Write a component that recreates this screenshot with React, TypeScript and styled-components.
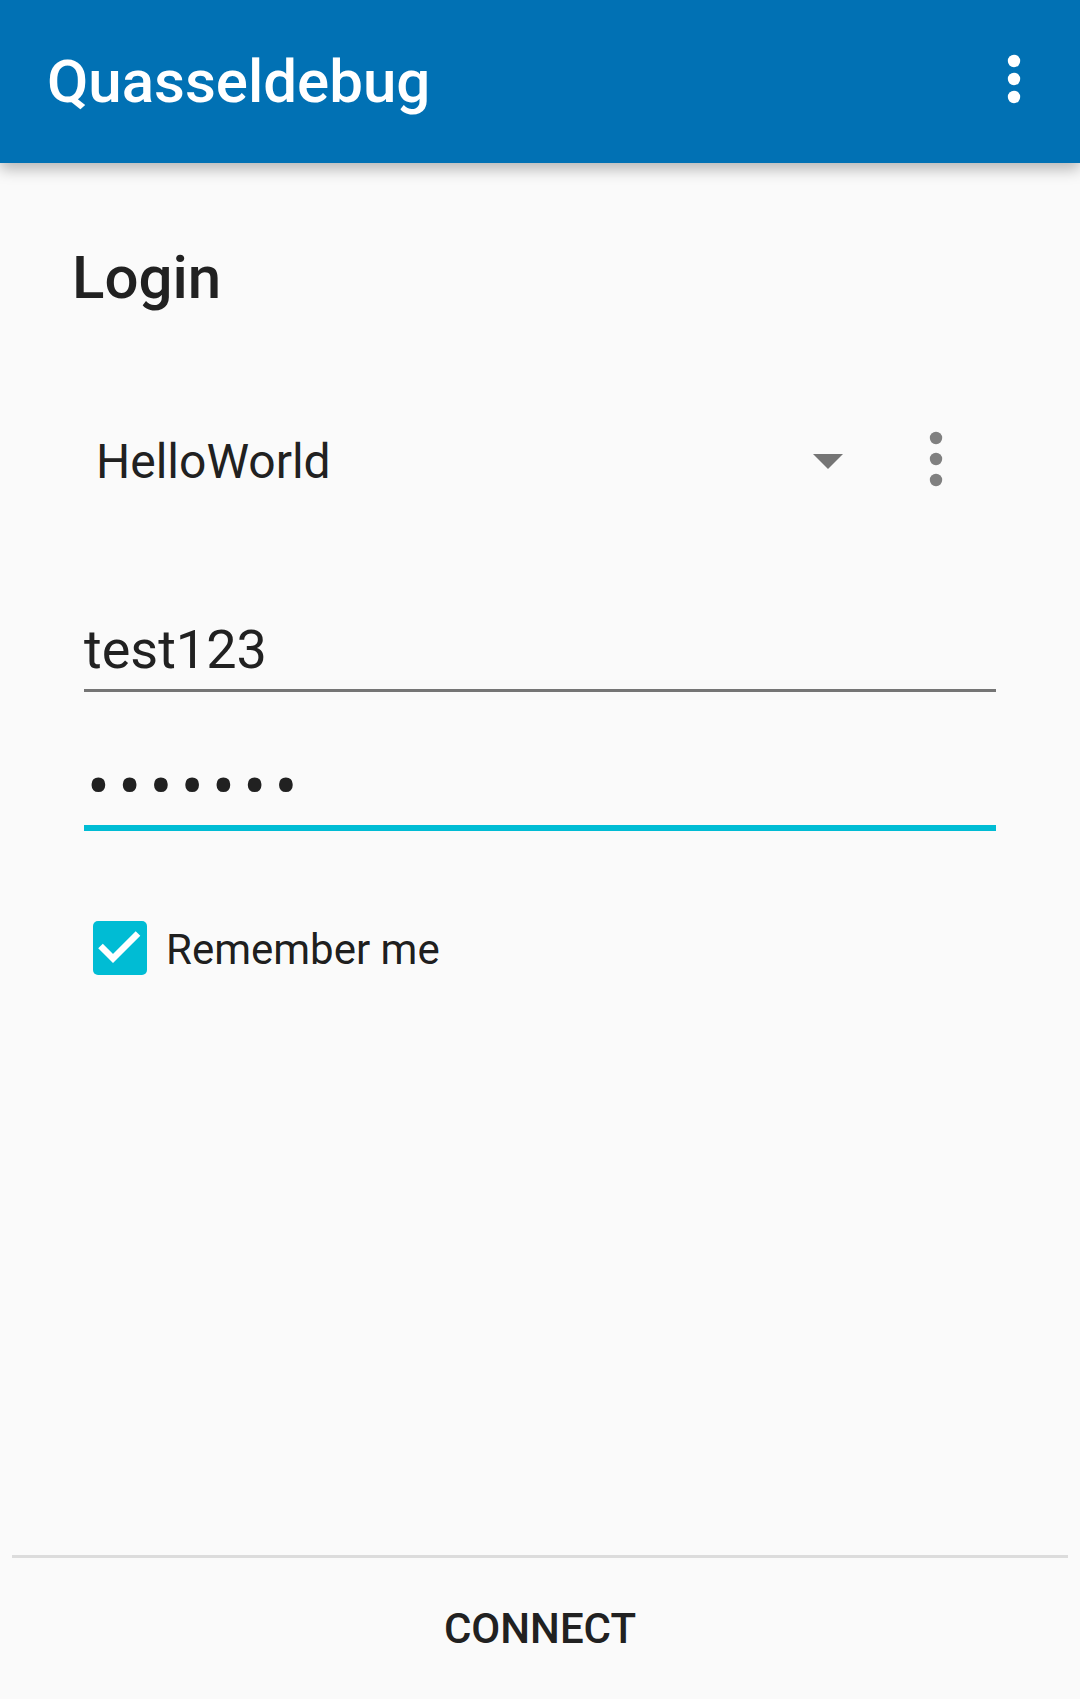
import React from "react";
import styled, { createGlobalStyle } from "styled-components";

const GlobalStyle = createGlobalStyle`
  html, body {
    margin: 0;
    padding: 0;
    background: #fafafa;
  }
  body {
    font-family: Roboto, "Noto Sans", "Liberation Sans", sans-serif;
    color: #212121;
  }
`;

const Page = styled.div`
  min-height: 100vh;
  display: flex;
  flex-direction: column;
  background: #fafafa;
`;

const AppBar = styled.header`
  height: 163px;
  flex-shrink: 0;
  background: #0171b4;
  display: flex;
  align-items: center;
  justify-content: space-between;
  padding: 0 30px 0 47px;
  box-shadow: 0 6px 14px rgba(0, 0, 0, 0.28);
  position: relative;
  z-index: 1;
`;

const AppTitle = styled.h1`
  margin: 0;
  font-size: 60px;
  line-height: 70px;
  font-weight: 500;
  color: #ffffff;
`;

const IconButton = styled.div`
  width: 72px;
  height: 72px;
  display: flex;
  align-items: center;
  justify-content: center;
  flex-shrink: 0;
  margin-top: -5px;
`;

const Content = styled.main`
  flex: 1;
  display: flex;
  flex-direction: column;
`;

const DialogTitle = styled.h2`
  margin: 80px 0 0 72px;
  font-size: 60px;
  line-height: 70px;
  font-weight: 500;
  color: #212121;
`;

const SpinnerRow = styled.div`
  margin-top: 88px;
  height: 120px;
  display: flex;
  align-items: center;
  padding: 0 108px 0 72px;
`;

const SpinnerBox = styled.div`
  flex: 1;
  display: flex;
  align-items: center;
  justify-content: space-between;
  padding-left: 24px;
`;

const SpinnerValue = styled.span`
  font-size: 48px;
  line-height: 56px;
  padding-top: 2px;
  color: #212121;
`;

const Caret = styled.svg`
  width: 30px;
  height: 15px;
  margin-right: 57px;
`;

const Field = styled.div<{ $focused?: boolean; $gap: number }>`
  margin: ${(p) => p.$gap}px 84px 0 84px;
  border-bottom: ${(p) => (p.$focused ? "6px solid #00bcd4" : "3px solid #757575")};
  padding-bottom: ${(p) => (p.$focused ? 6 : 7)}px;
  height: 64px;
  box-sizing: content-box;
`;

const FieldText = styled.span`
  display: block;
  font-size: 54px;
  line-height: 64px;
  color: #212121;
`;

const PasswordText = styled(FieldText)`
  font-size: 68px;
  letter-spacing: 8.3px;
  padding-left: 3px;
`;

const CheckRow = styled.label`
  margin-top: 81px;
  padding-left: 84px;
  display: flex;
  align-items: center;
  gap: 10px;
`;

const CheckLabel = styled.span`
  font-size: 42px;
  line-height: 50px;
  padding-top: 4px;
  color: rgba(0, 0, 0, 0.9);
`;

const Footer = styled.footer`
  flex-shrink: 0;
  display: flex;
  flex-direction: column;
`;

const Divider = styled.div`
  height: 3px;
  margin: 0 12px;
  background: #dcdcdc;
`;

const ConnectButton = styled.button`
  height: 141px;
  border: none;
  background: transparent;
  font-family: inherit;
  font-size: 42px;
  font-weight: 500;
  color: #212121;
  display: flex;
  align-items: center;
  justify-content: center;
  padding: 0;
`;

const MoreVert = ({ color, gap }: { color: string; gap: number }) => (
  <svg width="24" height={gap * 2 + 14} viewBox={`0 0 24 ${gap * 2 + 14}`}>
    <circle cx="12" cy="7" r="6.2" fill={color} />
    <circle cx="12" cy={7 + gap} r="6.2" fill={color} />
    <circle cx="12" cy={7 + gap * 2} r="6.2" fill={color} />
  </svg>
);

const CheckBox = () => (
  <svg width="72" height="72" viewBox="0 0 72 72">
    <rect x="9" y="9" width="54" height="54" rx="5" fill="#00bcd4" />
    <polyline
      points="16.5,34 29,46.5 54,21.5"
      fill="none"
      stroke="#ffffff"
      strokeWidth="6.5"
    />
  </svg>
);

export default function App() {
  return (
    <>
      <GlobalStyle />
      <Page>
        <AppBar>
          <AppTitle>Quasseldebug</AppTitle>
          <IconButton>
            <MoreVert color="#ffffff" gap={18} />
          </IconButton>
        </AppBar>
        <Content>
          <DialogTitle>Login</DialogTitle>
          <SpinnerRow>
            <SpinnerBox>
              <SpinnerValue>HelloWorld</SpinnerValue>
              <Caret viewBox="0 0 30 15">
                <polygon points="0,0 30,0 15,15" fill="#757575" />
              </Caret>
            </SpinnerBox>
            <IconButton>
              <MoreVert color="#808080" gap={21} />
            </IconButton>
          </SpinnerRow>
          <Field $gap={97}>
            <FieldText>test123</FieldText>
          </Field>
          <Field $gap={63} $focused>
            <PasswordText>•••••••</PasswordText>
          </Field>
          <CheckRow>
            <CheckBox />
            <CheckLabel>Remember me</CheckLabel>
          </CheckRow>
        </Content>
        <Footer>
          <Divider />
          <ConnectButton>CONNECT</ConnectButton>
        </Footer>
      </Page>
    </>
  );
}
